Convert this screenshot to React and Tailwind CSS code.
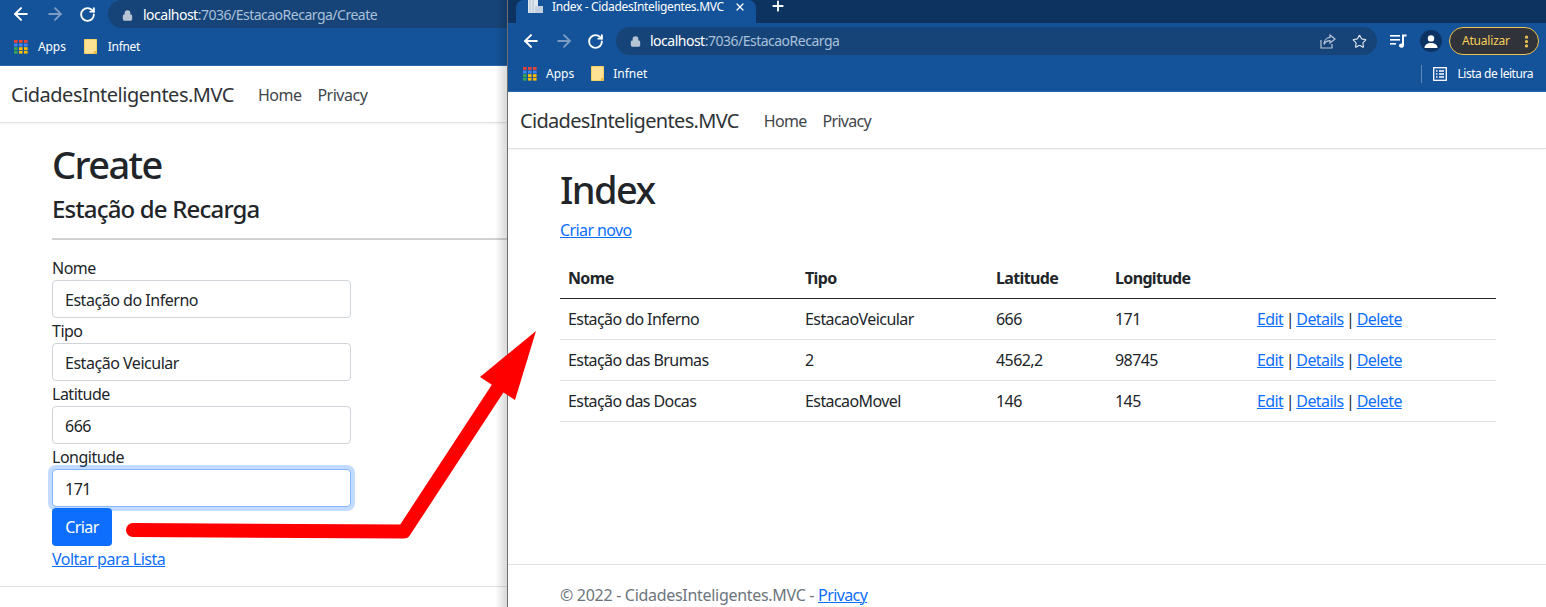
import React from "react";
import { ArrowLeft, ArrowRight, RotateCw, Lock, X, Plus, Star, EllipsisVertical } from "lucide-react";

function AppsIcon() {
  const c = ["#ea4335","#ea4335","#ea4335","#4285f4","#4285f4","#4285f4","#34a853","#fbbc04","#fbbc04","#34a853","#fbbc04","#fbbc04"];
  return (
    <svg width="14" height="14" viewBox="0 0 14 14" className="shrink-0">
      {[0,1,2,3].map((r) => [0,1,2].map((k) => (
        <rect key={r+"-"+k} x={k*5} y={r*3.6} width="3.6" height="2.8" fill={c[r*3+k]} />
      )))}
    </svg>
  );
}

function FolderIcon() {
  return (
    <svg width="13" height="15" viewBox="0 0 13 15" className="shrink-0 block">
      <path d="M0.5 0.5H12.5V14.5H0.5Z" fill="#fde293" stroke="#f5cf5f" />
      <rect x="10" y="12" width="2.5" height="2.5" fill="#e3b93f" />
    </svg>
  );
}

function Url({ path }) {
  return (
    <span className="text-[14px] leading-none whitespace-nowrap tracking-[-0.5px]">
      <span className="text-white">localhost</span>
      <span className="text-[#a9c0da]">{path}</span>
    </span>
  );
}

function Link({ children, className = "" }) {
  return <a className={`text-[#0d6efd] underline decoration-1 ${className}`}>{children}</a>;
}

function Navbar({ h, pl, brandGap, brandTrack, navTrack }) {
  return (
    <div className={`${h} ${pl} pt-[2px] flex items-center border-b border-[#dee2e6] bg-white shadow-[0_1px_3px_rgba(0,0,0,0.05)] shrink-0`}>
      <span className={`text-[20px] text-[#303336] leading-none ${brandTrack}`}>CidadesInteligentes.MVC</span>
      <span className={`${brandGap} text-[16px] text-[#41464b] leading-none ${navTrack}`}>Home</span>
      <span className={`ml-[16px] text-[16px] text-[#41464b] leading-none ${navTrack}`}>Privacy</span>
    </div>
  );
}

function Field({ label, value, focus }) {
  return (
    <div className="flex flex-col">
      <label className="h-[25px] text-[16px] leading-[26px] text-[#212529] tracking-[-0.5px]">{label}</label>
      <div
        className={`h-[38px] w-[299px] rounded-[4px] bg-white pl-[12px] text-[16px] leading-[39px] text-[#212529] tracking-[-0.47px] border ${
          focus ? "border-[#86b7fe] shadow-[0_0_0_4px_rgba(13,110,253,0.25)]" : "border-[#ced4da]"
        }`}
      >
        {value}
      </div>
    </div>
  );
}

function LeftWindow() {
  return (
    <div className="relative w-[507px] shrink-0 h-full flex flex-col overflow-hidden bg-white">
      <div className="h-[28px] bg-[#14539a] flex items-center shrink-0">
        <div className="flex items-center w-[108px] pl-[11px] gap-[14px]">
          <ArrowLeft size={20} strokeWidth={2.4} className="text-white" />
          <ArrowRight size={20} strokeWidth={2.2} className="text-[#7c9cc4]" />
          <RotateCw size={17} strokeWidth={2.6} className="text-white" />
        </div>
        <div className="flex-1 h-[28px] bg-[#174478] rounded-l-[14px] flex items-center pl-[14px] gap-[10px] pt-[2px]">
          <Lock size={11} strokeWidth={2.5} className="text-[#b7c4d6]" fill="#b7c4d6" />
          <Url path=":7036/EstacaoRecarga/Create" />
        </div>
      </div>
      <div className="h-[38px] bg-[#14539a] flex items-center pl-[14px] text-[12px] text-white shrink-0 border-b border-[#2c6ab0]">
        <AppsIcon />
        <span className="ml-[10px] tracking-[-0.1px]">Apps</span>
        <span className="ml-[18px]"><FolderIcon /></span>
        <span className="ml-[11px] tracking-[-0.3px]">Infnet</span>
      </div>
      <Navbar h="h-[57px]" pl="pl-[11px]" brandGap="ml-[24px]" brandTrack="tracking-[-0.5px]" navTrack="tracking-[-0.5px]" />
      <div className="pl-[52px] flex-1">
        <h1 className="text-[38px] leading-[43px] font-medium text-[#212529] mt-[20px] tracking-[-1.6px]">Create</h1>
        <h4 className="text-[24px] leading-[29px] font-medium text-[#212529] mt-[8px] tracking-[-0.82px]">Estação de Recarga</h4>
        <div className="h-[2px] bg-[#d0d1d3] mt-[15px] mb-[15px]" />
        <Field label="Nome" value="Estação do Inferno" />
        <Field label="Tipo" value="Estação Veicular" />
        <Field label="Latitude" value="666" />
        <Field label="Longitude" value="171" focus />
        <div className="mt-px w-[60px] h-[38px] rounded-[4px] bg-[#0d6efd] text-white text-[16px] leading-[38px] text-center tracking-[-0.6px]">Criar</div>
        <div className="mt-px leading-6 text-[16px] tracking-[-0.5px]"><Link>Voltar para Lista</Link></div>
      </div>
      <div className="h-[21px] border-t border-[#dee2e6] shrink-0" />
      <div className="absolute top-0 right-0 bottom-0 w-[12px] bg-gradient-to-r from-transparent to-black/15" />
    </div>
  );
}

function ShareIcon() {
  return (
    <svg width="16" height="15" viewBox="0 0 16 15" fill="none" stroke="#b7c4d6" strokeWidth="1.2" className="shrink-0">
      <path d="M1 6V14H12V10" />
      <path d="M10 1L15 5L10 9V6.6C7 6.6 5 8 4 10.5C4 6.5 6.5 3.6 10 3.4Z" />
    </svg>
  );
}

function QueueIcon() {
  return (
    <svg width="17" height="14" viewBox="0 0 17 14" fill="white" className="ml-[13px] shrink-0">
      <rect x="0" y="1" width="10" height="1.6" />
      <rect x="0" y="5" width="10" height="1.6" />
      <rect x="0" y="9" width="6" height="1.6" />
      <path d="M12 0.5H16.5V2.5H14V11.2C14 12.8 12.8 13.8 11.4 13.8C10 13.8 9 12.9 9 11.6C9 10.3 10.2 9.4 11.4 9.4C11.7 9.4 11.9 9.4 12 9.5Z" />
    </svg>
  );
}

function Toolbar() {
  return (
    <div className="h-[32px] pt-[4px] bg-[#14539a] flex items-center shrink-0">
      <div className="flex items-center w-[108px] pl-[13px] gap-[13px]">
        <ArrowLeft size={20} strokeWidth={2.4} className="text-white" />
        <ArrowRight size={20} strokeWidth={2.2} className="text-[#7c9cc4]" />
        <RotateCw size={17} strokeWidth={2.6} className="text-white" />
      </div>
      <div className="w-[761px] h-[28px] bg-[#174478] rounded-[14px] flex items-center pl-[14px] gap-[9px]">
        <Lock size={11} strokeWidth={2.5} className="text-[#b7c4d6]" fill="#b7c4d6" />
        <Url path=":7036/EstacaoRecarga" />
        <div className="ml-auto flex items-center gap-[16px] pr-[10px]">
          <ShareIcon />
          <Star size={15} strokeWidth={1.8} className="text-[#dfe6f0]" />
        </div>
      </div>
      <QueueIcon />
      <div className="ml-[13px] w-[22px] h-[22px] rounded-full bg-[#0c3363] flex items-center justify-center">
        <svg width="14" height="13" viewBox="0 0 14 13" fill="white">
          <circle cx="7" cy="3.4" r="3.2" />
          <path d="M0.5 13C0.5 9.6 3.5 8 7 8C10.5 8 13.5 9.6 13.5 13Z" />
        </svg>
      </div>
      <div className="ml-[7px] w-[90px] h-[28px] rounded-[14px] border border-[#f0c24b] bg-[#30343a] flex items-center pl-[12px] text-[12px] text-[#f6cf57] tracking-[-0.2px]">
        Atualizar
        <EllipsisVertical size={15} strokeWidth={3} className="ml-[9px] text-[#f6cf57]" />
      </div>
    </div>
  );
}

const rows = [
  ["Estação do Inferno", "EstacaoVeicular", "666", "171"],
  ["Estação das Brumas", "2", "4562,2", "98745"],
  ["Estação das Docas", "EstacaoMovel", "146", "145"],
];

function RightWindow() {
  return (
    <div className="relative flex-1 h-full flex flex-col overflow-hidden bg-white border-l border-[#6e6e6e]">
      <div className="h-[23px] bg-[#0d3461] flex items-start shrink-0">
        <div className="ml-[8px] w-[240px] h-[23px] bg-[#14539a] rounded-b-none rounded-t-[8px] flex items-start pl-[11px] text-[12px] text-white">
          <svg width="16" height="13" viewBox="0 0 16 13" className="shrink-0">
            <path d="M1 0H11V13H1Z" fill="#dfe6ee" />
            <path d="M3 0V13M6 0V13" stroke="#9fb2c9" strokeWidth="0.8" />
            <path d="M8 6H16V13H8Z" fill="#c3d0df" />
          </svg>
          <span className="ml-[9px] mt-px leading-[12px] whitespace-nowrap tracking-[-0.35px]">Index - CidadesInteligentes.MVC</span>
          <X size={12} strokeWidth={2.5} className="ml-[10px] mt-[1px] text-white shrink-0" />
        </div>
        <Plus size={16} strokeWidth={2.8} className="ml-[14px] -mt-[2px] text-white" />
      </div>
      <Toolbar />
      <div className="h-[37px] bg-[#14539a] flex items-center pl-[15px] pt-[1px] text-[12px] text-white shrink-0 border-b border-[#2c6ab0]">
        <AppsIcon />
        <span className="ml-[9px]">Apps</span>
        <span className="ml-[17px]"><FolderIcon /></span>
        <span className="ml-[9px]">Infnet</span>
        <div className="ml-auto h-[18px] border-l border-[#5d87b8]" />
        <svg width="14" height="14" viewBox="0 0 14 14" className="ml-[11px]" fill="none" stroke="white">
          <rect x="0.7" y="0.7" width="12.6" height="12.6" strokeWidth="1.3" />
          <path d="M3 4H4.5M6 4H11M3 7H4.5M6 7H11M3 10H4.5M6 10H11" strokeWidth="1.4" />
        </svg>
        <span className="ml-[10px] mr-[13px] tracking-[-0.45px]">Lista de leitura</span>
      </div>
      <Navbar h="h-[57px]" pl="pl-[12px]" brandGap="ml-[25px]" brandTrack="tracking-[-0.68px]" navTrack="tracking-[-0.7px]" />
      <div className="px-[52px] flex-1 min-h-0">
        <h1 className="text-[38px] leading-[43px] font-medium text-[#212529] mt-[19px] tracking-[-1.6px]">Index</h1>
        <div className="mt-[7px] leading-6 text-[16px] tracking-[-0.6px]"><Link>Criar novo</Link></div>
        <table className="mt-[16px] w-[936px] table-fixed text-[16px] text-[#212529] tracking-[-0.58px]">
          <colgroup>
            <col className="w-[237px]" />
            <col className="w-[191px]" />
            <col className="w-[119px]" />
            <col className="w-[142px]" />
            <col />
          </colgroup>
          <thead>
            <tr className="h-[40px] border-b border-[#212529] text-left">
              {["Nome", "Tipo", "Latitude", "Longitude", ""].map((t, i) => (
                <th key={i} className="px-[8px] font-bold tracking-[-0.65px]">{t}</th>
              ))}
            </tr>
          </thead>
          <tbody>
            {rows.map((r) => (
              <tr key={r[0]} className="h-[41px] border-b border-[#dee2e6]">
                {r.map((c, i) => <td key={i} className="px-[8px]">{c}</td>)}
                <td className="px-[8px] whitespace-nowrap [word-spacing:-1.2px]">
                  <Link>Edit</Link> | <Link>Details</Link> | <Link>Delete</Link>
                </td>
              </tr>
            ))}
          </tbody>
        </table>
      </div>
      <div className="h-[43px] border-t border-[#dee2e6] shrink-0 pl-[52px] pt-[18px] text-[16px] leading-6 text-[#6c757d] tracking-[-0.3px] whitespace-nowrap">
        © 2022 - CidadesInteligentes.MVC - <Link className="tracking-[-0.6px]">Privacy</Link>
      </div>
    </div>
  );
}

export default function App() {
  return (
    <div className="relative w-[1546px] h-[607px] overflow-hidden flex font-['Noto_Sans',sans-serif]">
      <LeftWindow />
      <RightWindow />
      <svg className="absolute inset-0 pointer-events-none" width="1546" height="607" viewBox="0 0 1546 607">
        <path d="M133 530 L300 531 L404 531.5 L498 388" fill="none" stroke="#ff0000" strokeWidth="14" strokeLinecap="round" strokeLinejoin="round" />
        <path d="M536 331 L480 377 L515 400 Z" fill="#ff0000" />
      </svg>
    </div>
  );
}
